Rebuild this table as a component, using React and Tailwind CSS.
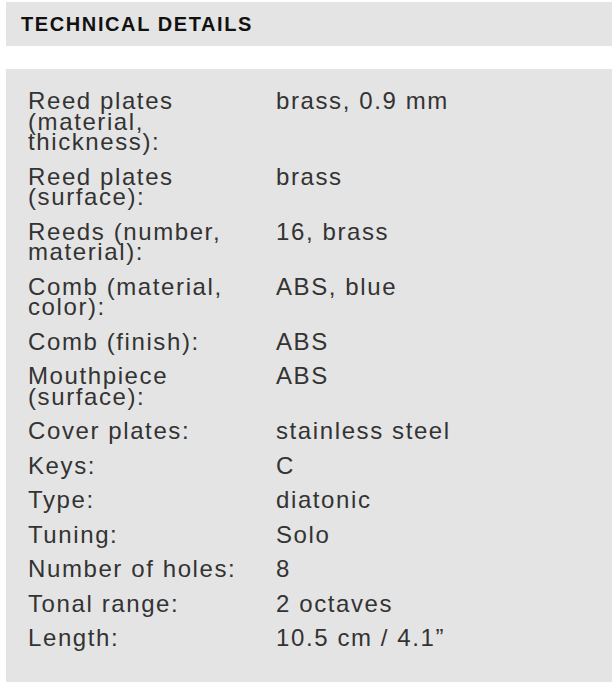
const rows = [
  ["Reed plates (material, thickness):", "brass, 0.9 mm"],
  ["Reed plates (surface):", "brass"],
  ["Reeds (number, material):", "16, brass"],
  ["Comb (material, color):", "ABS, blue"],
  ["Comb (finish):", "ABS"],
  ["Mouthpiece (surface):", "ABS"],
  ["Cover plates:", "stainless steel"],
  ["Keys:", "C"],
  ["Type:", "diatonic"],
  ["Tuning:", "Solo"],
  ["Number of holes:", "8"],
  ["Tonal range:", "2 octaves"],
  ["Length:", "10.5 cm / 4.1\u201d"],
];

export default function App() {
  return (
    <div className="w-[612px] h-[682px] bg-white pt-[2px] pl-[6px] font-['Liberation_Sans',Arial,sans-serif] overflow-hidden">
      <div className="h-[44px] bg-[#e4e4e4] flex items-center pl-[15px]">
        <h2 className="text-[20px] font-bold tracking-[1.6px] text-[#111] leading-none">
          TECHNICAL DETAILS
        </h2>
      </div>

      <div className="mt-[23px] h-[620px] bg-[#e4e4e4] pt-[15px] pl-[22px]">
        <table className="border-collapse text-[24px] leading-[20.5px] tracking-[1.6px] text-[#333]">
          <tbody>
            {rows.map(([label, value], i) => (
              <tr key={i}>
                <td className="w-[248px] p-0 pr-[20px] py-[7px] align-top">{label}</td>
                <td className="p-0 py-[7px] align-top">{value}</td>
              </tr>
            ))}
          </tbody>
        </table>
      </div>
    </div>
  );
}
